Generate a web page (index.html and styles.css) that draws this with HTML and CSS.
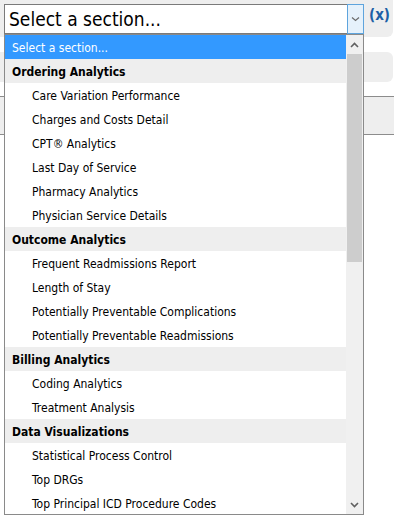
FILE: index.html
```html
<!DOCTYPE html>
<html lang="en">
  <head>
    <meta charset="UTF-8" />
    <meta name="viewport" content="width=device-width, initial-scale=1.0" />
    <title>Section picker</title>
    <link rel="stylesheet" href="styles.css">
  </head>
  <body>
    <div class="page">
      <!-- Picker bar -->
      <div class="panel panel-top">
        <div class="select">
          <span class="select-value">Select a section...</span>
          <span class="select-button">
            <svg width="9" height="6" viewBox="0 0 9 6"><path d="M1 1.5 L4.5 4.5 L8 1.5" fill="none" stroke="#6b6b6b" stroke-width="1.2"/></svg>
          </span>
        </div>
        <span class="clear">(x)</span>
      </div>
      <div class="panel panel-mid"></div>
      <div class="panel panel-box"></div>

      <!-- Open dropdown -->
      <div class="dropdown">
        <ul class="options">
          <li class="option selected">Select a section...</li>
          <li class="group">Ordering Analytics</li>
          <li class="option">Care Variation Performance</li>
          <li class="option">Charges and Costs Detail</li>
          <li class="option">CPT® Analytics</li>
          <li class="option">Last Day of Service</li>
          <li class="option">Pharmacy Analytics</li>
          <li class="option">Physician Service Details</li>
          <li class="group">Outcome Analytics</li>
          <li class="option">Frequent Readmissions Report</li>
          <li class="option">Length of Stay</li>
          <li class="option">Potentially Preventable Complications</li>
          <li class="option">Potentially Preventable Readmissions</li>
          <li class="group">Billing Analytics</li>
          <li class="option">Coding Analytics</li>
          <li class="option">Treatment Analysis</li>
          <li class="group">Data Visualizations</li>
          <li class="option">Statistical Process Control</li>
          <li class="option">Top DRGs</li>
          <li class="option">Top Principal ICD Procedure Codes</li>
        </ul>
        <div class="scrollbar">
          <span class="scroll-arrow">
            <svg width="9" height="6" viewBox="0 0 9 6"><path d="M1 5 L4.5 1.5 L8 5" fill="none" stroke="#606060" stroke-width="1.6"/></svg>
          </span>
          <span class="scroll-thumb"></span>
          <span class="scroll-track"></span>
          <span class="scroll-arrow">
            <svg width="9" height="6" viewBox="0 0 9 6"><path d="M1 1 L4.5 4.5 L8 1" fill="none" stroke="#606060" stroke-width="1.6"/></svg>
          </span>
        </div>
      </div>
    </div>
  </body>
</html>
```

FILE: styles.css
```css
* {
  margin: 0;
  padding: 0;
  box-sizing: border-box;
}

body {
  background: #ffffff;
  font-family: "DejaVu Sans Condensed", "DejaVu Sans", sans-serif;
  color: #000000;
  overflow: hidden;
}

.page {
  position: relative;
  width: 394px;
  height: 520px;
}

.panel {
  width: 393px;
  background: #eeeeee;
}

.panel-top {
  display: flex;
  align-items: flex-start;
  gap: 5px;
  height: 37px;
  padding: 4px 0 0 4px;
  border-radius: 0 0 6px 0;
}

.panel-mid {
  height: 30px;
  margin-top: 15px;
  border-radius: 0 6px 6px 0;
}

.panel-box {
  width: 394px;
  height: 39px;
  margin-top: 14px;
  border-top: 1px solid #8c8c8c;
  border-bottom: 1px solid #8c8c8c;
}

.select {
  display: flex;
  width: 360px;
  height: 30px;
  background: #ffffff;
  border: 1px solid #7a7a7a;
}

.select-value {
  flex: 1;
  padding: 2px 0 0 4px;
  font-size: 19px;
  line-height: 24px;
}

.select-button {
  display: flex;
  align-items: center;
  justify-content: center;
  width: 17px;
  margin: -1px -1px -1px 0;
  background: #e5f1fb;
  border: 1px solid #5ea4dd;
}

.clear {
  padding-top: 2px;
  font-size: 15px;
  font-weight: bold;
  color: #1d5fa6;
}

.dropdown {
  position: absolute;
  top: 34px;
  left: 4px;
  width: 360px;
  height: 481px;
  display: flex;
  background: #ffffff;
  border: 1px solid #8a8a8a;
  overflow: hidden;
}

.options {
  flex: 1;
  list-style: none;
  font-size: 12px;
}

.options li {
  height: 24px;
  padding-top: 1px;
  line-height: 24px;
  white-space: nowrap;
}

.option {
  padding-left: 27px;
}

.option.selected {
  padding-left: 7px;
  background: #3399ff;
  color: #ffffff;
}

.group {
  padding-left: 7px;
  font-weight: bold;
  background: #eeeeee;
}

.scrollbar {
  display: flex;
  flex-direction: column;
  width: 17px;
  background: #f0f0f0;
}

.scroll-arrow {
  display: flex;
  align-items: center;
  justify-content: center;
  height: 19px;
}

.scroll-thumb {
  height: 208px;
  margin: 0 1px;
  background: #cdcdcd;
}

.scroll-track {
  flex: 1;
}
```
